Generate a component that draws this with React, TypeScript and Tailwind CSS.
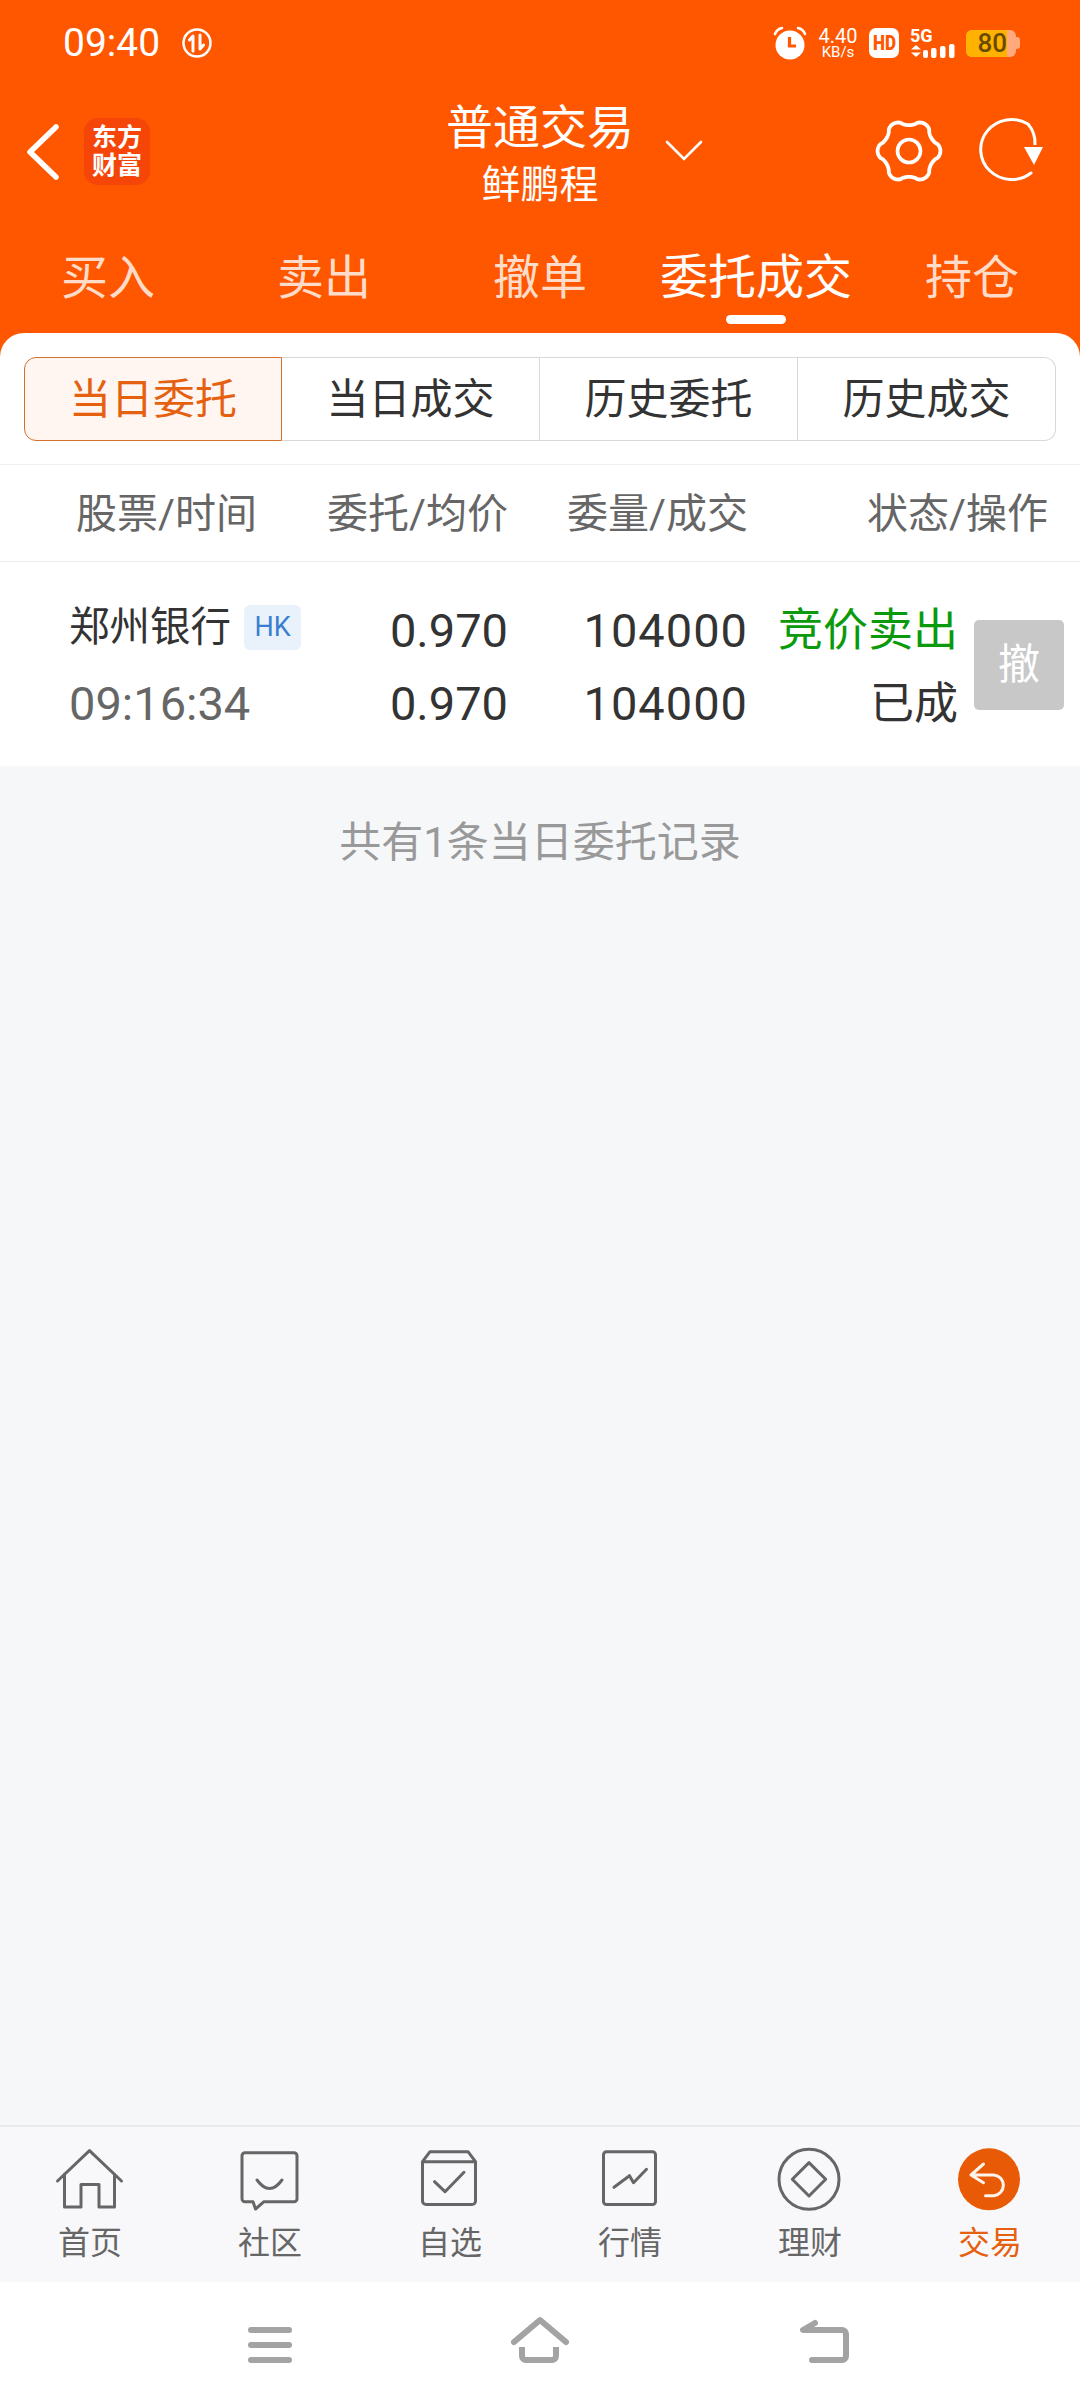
import React from "react";

const gearPath = (() => {
  const pts: string[] = [];
  for (let i = 0; i <= 240; i++) {
    const t = (i / 240) * Math.PI * 2;
    const c = Math.cos(6 * t);
    const r = 28.6 + 2.8 * Math.sign(c) * Math.pow(Math.abs(c), 0.7);
    pts.push(`${i === 0 ? "M" : "L"}${(36 + r * Math.cos(t)).toFixed(2)} ${(36 + r * Math.sin(t)).toFixed(2)}`);
  }
  return pts.join(" ") + " Z";
})();

function NavIcon({ name }: { name: string }) {
  const c = "#666666";
  return (
    <svg width="72" height="66" viewBox="0 0 72 66" fill="none" stroke={c} strokeWidth="3" strokeLinecap="round" strokeLinejoin="round">
      {name === "home" && <path d="M3.5 34 L35.5 3.7 L67.5 34 M10.5 27 V60 H27 V37.5 H45 V60 H60.5 V27" />}
      {name === "chat" && (
        <>
          <path d="M11 5.7 H60 a3 3 0 0 1 3 3 V51.7 a3 3 0 0 1 -3 3 H30 L21.5 62 L19 54.7 H11 a3 3 0 0 1 -3 -3 V8.7 a3 3 0 0 1 3 -3 Z" />
          <path d="M23 33 Q35.5 50 48 33" />
        </>
      )}
      {name === "box" && (
        <>
          <path d="M16 4.7 H54 L61.5 14.7 V54 a3.5 3.5 0 0 1 -3.5 3.5 H12 a3.5 3.5 0 0 1 -3.5 -3.5 V14.7 Z M8.5 14.7 H61.5" />
          <path d="M20.5 34.7 L31 44.7 L50 25.3" />
        </>
      )}
      {name === "chart" && (
        <>
          <rect x="9.5" y="4.7" width="52" height="52.8" rx="3" />
          <path d="M20 40.3 L35.5 28.7 L39.5 35.7 L52.5 22.3" />
        </>
      )}
      {name === "money" && (
        <>
          <circle cx="35" cy="32.3" r="30" />
          <path d="M35 15.6 L51.7 32.3 L35 49 L18.3 32.3 Z" />
        </>
      )}
      {name === "trade" && (
        <>
          <circle cx="35" cy="32.3" r="31" fill="#E85A06" stroke="none" />
          <path d="M29.5 17 L17 28 L29.5 35.7 M17 28 H40 a10.4 10.4 0 0 1 0 20.7 H31.5" stroke="#FFF3EA" />
        </>
      )}
    </svg>
  );
}

const navItems = [
  { label: "首页", icon: "home" },
  { label: "社区", icon: "chat" },
  { label: "自选", icon: "box" },
  { label: "行情", icon: "chart" },
  { label: "理财", icon: "money" },
  { label: "交易", icon: "trade", active: true },
];

const tabs = ["买入", "卖出", "撤单", "委托成交", "持仓"];
const segments = ["当日委托", "当日成交", "历史委托", "历史成交"];

function StatusBar() {
  return (
    <div className="flex h-[86px] items-center text-white">
      <span className="ml-[63px] text-[39px] leading-none">09:40</span>
      <svg className="ml-[21px]" width="32" height="32" viewBox="0 0 32 32" fill="none" stroke="white" strokeLinecap="round" strokeLinejoin="round">
        <circle cx="16" cy="16" r="13.5" strokeWidth="2.5" />
        <path d="M12 24 V9 L8.5 13 M19 8 V22 L22.5 18" strokeWidth="3" />
      </svg>
      <svg className="ml-auto" width="36" height="34" viewBox="0 0 36 34">
        <circle cx="18" cy="19" r="14.5" fill="white" />
        <path d="M17.5 11 V20 H24" fill="none" stroke="#FF5700" strokeWidth="3.2" />
        <path d="M3 8 Q5 3 10 2 M33 8 Q31 3 26 2" fill="none" stroke="white" strokeWidth="2.6" strokeLinecap="round" />
      </svg>
      <div className="ml-[9px] flex w-[42px] flex-col items-center leading-none">
        <span className="text-[20px] leading-[17px]">4.40</span>
        <span className="text-[15px] leading-[14px]">KB/s</span>
      </div>
      <div className="ml-[10px] flex h-[30px] w-[30px] items-center justify-center rounded-[7px] bg-white text-[20px] font-black leading-none text-[#FF5700]">
        <span className="scale-x-[0.85]">HD</span>
      </div>
      <div className="ml-[11px] flex w-[46px] flex-col items-start">
        <span className="h-[15px] text-[18px] font-bold leading-[15px]">5G</span>
        <svg className="mt-[1px]" width="46" height="14" viewBox="0 0 46 14" fill="white">
          <path d="M1 5.5 L6 1 L11 5.5 Z M1 8.5 L6 13 L11 8.5 Z" />
          <rect x="13" y="6" width="5" height="8" rx="2" />
          <rect x="21" y="4" width="5.5" height="10" rx="2" />
          <rect x="30" y="2" width="5.5" height="12" rx="2" />
          <rect x="39" y="0" width="5.5" height="14" rx="2" />
        </svg>
      </div>
      <div className="ml-[10px] mr-[60px] flex items-center">
        <div className="flex h-[27px] w-[50px] overflow-hidden rounded-[6px] bg-[#FFA97C]">
          <div className="flex w-[41px] items-center justify-end bg-[#FFB300] text-[26px] font-medium leading-none text-[#6A4A00]">80</div>
        </div>
        <div className="h-[12px] w-[4px] rounded-r-[3px] bg-[#FFA97C]" />
      </div>
    </div>
  );
}

function TitleRow() {
  return (
    <div className="grid h-[138px] grid-cols-[1fr_auto_1fr] items-center text-white">
      <div className="flex items-center pb-[7px] pl-[26px]">
        <svg width="36" height="58" viewBox="0 0 36 58" fill="none" stroke="white" strokeWidth="5.5" strokeLinecap="round" strokeLinejoin="round">
          <path d="M30 4 L4 29 L30 54" />
        </svg>
        <div className="ml-[22px] flex h-[67px] w-[66px] flex-col items-center justify-center rounded-[14px] bg-[#F54508] text-[25px] font-bold leading-[28px] text-white">
          <span>东方</span>
          <span>财富</span>
        </div>
      </div>
      <div className="flex flex-col items-center">
        <span className="text-[47px] leading-[56px]">普通交易</span>
        <span className="mt-[4px] text-[39px] leading-[50px]">鲜鹏程</span>
      </div>
      <div className="flex items-center pb-[9px]">
        <svg className="ml-[30px]" width="40" height="24" viewBox="0 0 40 24" fill="none" stroke="white" strokeWidth="2.6" strokeLinecap="round">
          <path d="M3 3 L20 20 L37 3" />
        </svg>
        <svg className="ml-[169px]" width="72" height="72" viewBox="0 0 72 72" fill="none" stroke="white" strokeLinejoin="round">
          <path d={gearPath} strokeWidth="3.8" />
          <circle cx="36" cy="36" r="11.5" strokeWidth="3.6" />
        </svg>
        <svg className="ml-[26px]" width="76" height="72" viewBox="0 0 76 72" fill="none">
          <path d="M57 9 A 31 30 0 1 0 60 58" stroke="white" strokeWidth="3" fill="none" strokeLinecap="round" />
          <path d="M57 9 A 31 30 0 0 1 64 30" stroke="white" strokeWidth="3" fill="none" />
          <path d="M53 32 H72 L63 50 Z" fill="white" />
        </svg>
      </div>
    </div>
  );
}

function TabBar() {
  return (
    <div className="grid h-[109px] grid-cols-5">
      {tabs.map((t) => {
        const active = t === "委托成交";
        return (
          <div key={t} className="flex flex-col items-center pt-[27px]">
            <span className={active ? "text-[48px] leading-[54px] text-white" : "text-[47px] leading-[54px] text-[#FFDCC9]"}>{t}</span>
            {active && <div className="mt-[10px] h-[9px] w-[60px] rounded-full bg-white" />}
          </div>
        );
      })}
    </div>
  );
}

function Segments() {
  return (
    <div className="flex h-[131px] rounded-t-[24px] bg-white pl-[24px] pt-[24px]">
      {segments.map((s, i) => (
        <div
          key={s}
          className={
            i === 0
              ? "flex h-[84px] w-[258px] items-center justify-center rounded-l-[12px] border border-[#D2702F] bg-[#FFF6F2] text-[42px] text-[#E5600F]"
              : i === 3
                ? "flex h-[84px] w-[258px] items-center justify-center rounded-r-[12px] border border-l-0 border-[#D8D8D8] text-[42px] text-[#333333]"
                : "flex h-[84px] w-[258px] items-center justify-center border border-l-0 border-[#D8D8D8] text-[42px] text-[#333333]"
          }
        >
          {s}
        </div>
      ))}
    </div>
  );
}

function Table() {
  return (
    <div className="bg-white">
      <div className="grid h-[97px] grid-cols-[320px_188px_240px_300px] items-center border-t border-t-[#F0F0F0] pt-[4px] text-[41px] text-[#666666]">
        <span className="pl-[76px]">股票/时间</span>
        <span className="whitespace-nowrap text-right">委托/均价</span>
        <span className="whitespace-nowrap text-right">委量/成交</span>
        <span className="whitespace-nowrap text-right">状态/操作</span>
      </div>
      <div className="grid h-[205px] grid-cols-[320px_188px_240px_210px_auto] grid-rows-[73px_73px] items-center border-t border-t-[#EBEBEB] pt-[32px] text-[47px] leading-none text-[#333333]">
        <div className="flex items-center pb-[6px] pl-[69px]">
          <span className="text-[40.5px]">郑州银行</span>
          <span className="ml-[13px] flex h-[45px] w-[57px] items-center justify-center rounded-[6px] bg-[#E9F2FB] text-[27px] text-[#3A7FCF]">HK</span>
        </div>
        <span className="text-right">0.970</span>
        <span className="text-right tracking-[1px]">104000</span>
        <span className="whitespace-nowrap text-right text-[45px] text-[#0B9A0B]">竞价卖出</span>
        <div className="row-span-2 mb-[5px] ml-[16px] flex h-[90px] w-[90px] items-center justify-center self-center rounded-[5px] bg-[#C8C8C8] text-[42px] text-white">撤</div>
        <span className="pl-[69px] text-[#666666]">09:16:34</span>
        <span className="text-right">0.970</span>
        <span className="text-right tracking-[1px]">104000</span>
        <span className="text-right text-[44px]">已成</span>
      </div>
    </div>
  );
}

export default function App() {
  return (
    <div className="flex h-[2408px] w-[1080px] flex-col overflow-hidden bg-[#F6F7F9] font-['Roboto','Noto_Sans_CJK_SC',sans-serif]">
      <div className="bg-[#FF5700]">
        <StatusBar />
        <TitleRow />
        <TabBar />
        <Segments />
      </div>
      <Table />
      <div className="flex-1 pt-[52px] text-center text-[42px] leading-[50px] text-[#999999]">共有1条当日委托记录</div>
      <div className="grid h-[157px] grid-cols-6 border-t-2 border-t-[#E8E9EB] bg-[#F8F8FA] pt-[20px]">
        {navItems.map((n) => (
          <div key={n.label} className="flex flex-col items-center">
            <NavIcon name={n.icon} />
            <span className={n.active ? "mt-[10px] text-[32px] leading-[40px] text-[#E5600F]" : "mt-[10px] text-[32px] leading-[40px] text-[#666666]"}>{n.label}</span>
          </div>
        ))}
      </div>
      <div className="flex h-[126px] items-start bg-white pl-[248px] pt-[45px]">
        <svg width="44" height="36" viewBox="0 0 44 36" fill="#A3A3A3">
          <rect x="0" y="0" width="44" height="6" rx="3" />
          <rect x="0" y="15" width="44" height="6" rx="3" />
          <rect x="0" y="30" width="44" height="6" rx="3" />
        </svg>
        <svg className="ml-[216px] -mt-[13px]" width="62" height="52" viewBox="0 0 62 52" fill="none" stroke="#A3A3A3" strokeWidth="6" strokeLinecap="round" strokeLinejoin="round">
          <path d="M6 28 L32 6 L58 28" />
          <path d="M14 33 V42 a4 4 0 0 0 4 4 H44 a4 4 0 0 0 4 -4 V33" strokeLinecap="butt" />
        </svg>
        <svg className="ml-[230px] -mt-[9px]" width="50" height="48" viewBox="0 0 50 48" fill="none" stroke="#A3A3A3" strokeWidth="6" strokeLinecap="round" strokeLinejoin="round">
          <path d="M15 5 L3 12 H42 a4 4 0 0 1 4 4 V38 a4 4 0 0 1 -4 4 H12" />
        </svg>
      </div>
    </div>
  );
}
